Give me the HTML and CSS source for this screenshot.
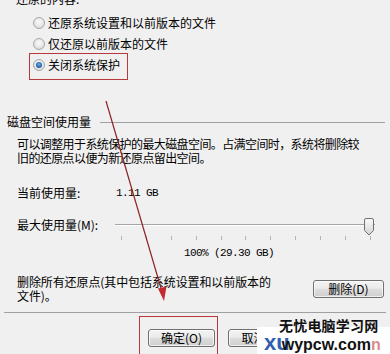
FILE: index.html
```html
<!DOCTYPE html>
<html lang="zh-CN">

<head>
	<meta charset="utf-8">
	<title>系统保护</title>
	<link rel="stylesheet" href="styles.css">
</head>

<body>

	<div class="dialog">

		<div class="legend">还原的内容:</div>
		<div class="options">
			<div class="radio"><span class="dot"></span>还原系统设置和以前版本的文件</div>
			<div class="radio"><span class="dot"></span>仅还原以前版本的文件</div>
			<div class="radio checked marked"><span class="dot"></span>关闭系统保护</div>
		</div>

		<div class="group-title">磁盘空间使用量</div>
		<p class="desc">可以调整用于系统保护的最大磁盘空间。占满空间时，系统将删除较<br>旧的还原点以便为新还原点留出空间。</p>

		<div class="usage">
			<span class="key">当前使用量:</span>
			<span class="mono">1.11 GB</span>
		</div>

		<div class="max-row">
			<span class="key">最大使用量(M):</span>
			<div class="slider">
				<div class="track"></div>
				<div class="ticks">
					<i></i><i></i><i></i><i></i><i></i><i></i><i></i><i></i><i></i><i></i><i></i>
				</div>
				<svg class="thumb" width="10" height="18" viewBox="0 0 10 18">
					<defs>
						<linearGradient id="thumb_fill" x1="0" y1="0" x2="0" y2="1">
							<stop offset="0" stop-color="#fafafa" />
							<stop offset="1" stop-color="#d2d2d2" />
						</linearGradient>
					</defs>
					<path d="M0.5 2 Q0.5 0.5 2 0.5 H8 Q9.5 0.5 9.5 2 V12.5 L5 17 L0.5 12.5 Z" fill="url(#thumb_fill)" stroke="#707070" />
				</svg>
			</div>
		</div>
		<div class="pct mono">100% (29.30 GB)</div>

		<div class="delete-row">
			<div class="delete-text">
				<div>删除所有还原点(其中包括系统设置和以前版本的</div>
				<div>文件)。</div>
			</div>
			<button type="button" class="btn btn-delete">删除(D)</button>
		</div>

		<div class="sep"></div>

		<div class="actions">
			<div class="ok-mark"><button type="button" class="btn">确定(O)</button></div>
			<button type="button" class="btn btn-cancel">取消(C)</button>
		</div>

	</div>

	<svg class="arrow" width="390" height="354" viewBox="0 0 390 354">
		<line x1="106" y1="101" x2="162.4" y2="293" stroke="#8e2323" stroke-width="1.2" />
		<polygon points="164,301 158,288.5 166.5,286.5" fill="#c42a2e" />
	</svg>

	<div class="watermark">
		<div class="wm-title">无忧电脑学习网</div>
		<div class="wm-logo"><span class="xu">xu</span>wypcw.com<span class="tail">n</span></div>
	</div>

</body>
</html>
```

FILE: styles.css
```css
body {
	margin: 0;
	height: 354px;
	overflow: hidden;
	position: relative;
	background: #f0f0f0;
	color: #000;
	font-family: "Noto Sans CJK SC", "Liberation Sans", sans-serif;
	font-size: 12px;
}

.dialog {
	margin-top: -8px;
}

.legend {
	line-height: 14px;
	padding-left: 16px;
}

.options {
	margin-top: 6px;
}

.radio {
	display: flex;
	align-items: center;
	gap: 3px;
	height: 21px;
	padding-left: 33px;
}

.radio.marked {
	width: max-content;
	margin-top: -1px;
	margin-left: 29px;
	padding: 0 7px 4px 3px;
	border: 1px solid #b8393c;
}

.dot {
	position: relative;
	box-sizing: border-box;
	width: 12px;
	height: 12px;
	border: 1px solid #a8a8a8;
	border-radius: 50%;
	background: radial-gradient(circle at 50% 40%, #fbfbfb 0, #e4e4e4 60%, #cfcfcf 100%);
}

.checked .dot::after {
	content: "";
	position: absolute;
	left: 2px;
	top: 2px;
	width: 6px;
	height: 6px;
	border-radius: 50%;
	background: radial-gradient(circle at 50% 40%, #6fb0e8 0, #2c6cae 55%, #173f6e 100%);
}

.group-title {
	display: flex;
	align-items: center;
	gap: 9px;
	margin-top: 35px;
	padding: 0 5px 0 7px;
	line-height: 14px;
}

.group-title::after {
	content: "";
	flex: 1;
	border-top: 1px solid #a0a0a0;
}

.desc {
	margin: 8px 0 0;
	padding-left: 17px;
	line-height: 14px;
	letter-spacing: -0.6px;
}

.mono {
	font-family: "Liberation Mono", monospace;
	font-size: 11px;
	letter-spacing: -0.6px;
}

.usage {
	display: flex;
	margin-top: 21px;
	padding-left: 17px;
	line-height: 14px;
}

.usage .key {
	width: 99px;
}

.max-row {
	display: flex;
	margin-top: 15px;
	padding-left: 17px;
}

.max-row .key {
	width: 98px;
	line-height: 20px;
}

.slider {
	position: relative;
	width: 260px;
}

.track {
	margin-top: 9px;
	height: 1px;
	background: #a6a6a6;
	border-bottom: 1px solid #fff;
}

.ticks {
	display: flex;
	justify-content: space-between;
	margin-top: 10px;
	padding: 0 4px 0 6px;
}

.ticks i {
	width: 1px;
	height: 4px;
	background: #b4b4b4;
}

.thumb {
	position: absolute;
	right: 1px;
	top: 3px;
}

.pct {
	margin-top: 6px;
	padding-left: 184px;
	line-height: 14px;
}

.delete-row {
	display: flex;
	justify-content: space-between;
	align-items: flex-start;
	margin-top: 15px;
	padding: 0 6px 0 17px;
}

.delete-text {
	line-height: 13px;
	letter-spacing: -0.1px;
}

.delete-text div + div {
	margin-top: 1px;
}

.btn {
	box-sizing: border-box;
	width: 67px;
	height: 18px;
	padding: 0;
	border: 1px solid #707070;
	border-radius: 3px;
	background: linear-gradient(#f3f3f3, #ebebeb 45%, #dddddd 52%, #cfcfcf);
	box-shadow: inset 0 0 0 1px rgba(255, 255, 255, 0.7);
	color: #000;
	font: inherit;
	line-height: 16px;
}

.btn-delete {
	width: 71px;
	margin-top: 5px;
}

.sep {
	margin: 10px 4px 0;
	border-top: 1px solid #a0a0a0;
}

.actions {
	display: flex;
	align-items: flex-start;
	margin-top: 3px;
	padding-left: 139px;
}

.ok-mark {
	padding: 12px 2px 20px 8px;
	border: 1px solid #b8393c;
}

.btn-cancel {
	margin: 13px 0 0 10px;
}

.arrow {
	position: absolute;
	left: 0;
	top: 0;
	pointer-events: none;
}

.watermark {
	position: absolute;
	left: 257px;
	top: 327px;
	right: 0;
	bottom: 0;
	background: #fff;
}

.wm-title {
	position: absolute;
	left: 22px;
	top: -9px;
	font-size: 14px;
	font-weight: 700;
	letter-spacing: 0.2px;
	line-height: 15px;
	color: #111;
}

.wm-logo {
	position: absolute;
	left: 7px;
	top: 6px;
	white-space: nowrap;
	font-family: "Liberation Sans", sans-serif;
	font-size: 16px;
	font-weight: 700;
	line-height: 20px;
	color: #111;
}

.xu {
	margin-right: -8px;
	font-size: 22px;
	color: #2f5fae;
}

.tail {
	color: #c85a5a;
	opacity: 0.7;
}
```
